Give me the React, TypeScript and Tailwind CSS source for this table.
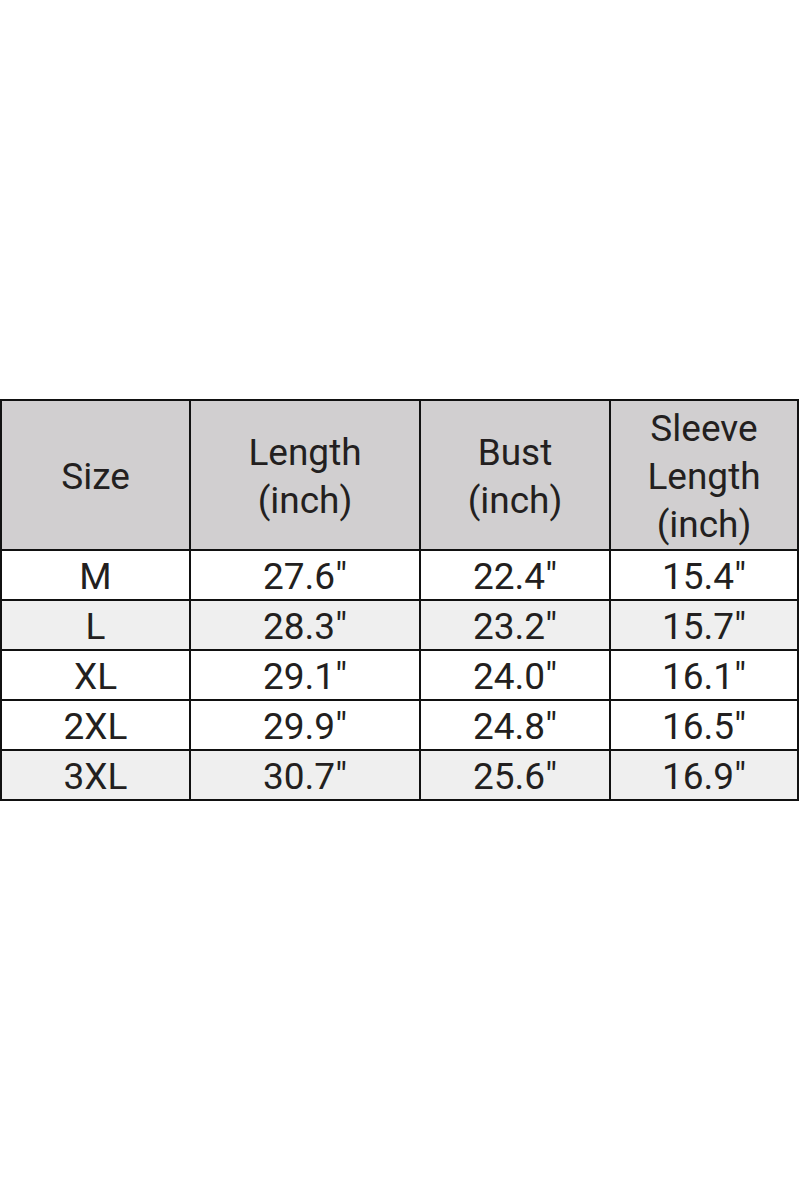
const headers = [["Size"], ["Length", "(inch)"], ["Bust", "(inch)"], ["Sleeve", "Length", "(inch)"]];

const rows = [
  { cells: ["M", '27.6"', '22.4"', '15.4"'], shaded: false },
  { cells: ["L", '28.3"', '23.2"', '15.7"'], shaded: true },
  { cells: ["XL", '29.1"', '24.0"', '16.1"'], shaded: false },
  { cells: ["2XL", '29.9"', '24.8"', '16.5"'], shaded: false },
  { cells: ["3XL", '30.7"', '25.6"', '16.9"'], shaded: true },
];

const App = () => {
  return (
    <div className="w-[800px] h-[1200px] bg-white pt-[399px] font-['Roboto',sans-serif] text-[#231f20]">
      <div className="grid grid-cols-[189px_230px_190px_188px] w-[799px] border-l-2 border-t-2 border-[#111]">
        {headers.map((lines, i) => (
          <div
            key={i}
            className="h-[150px] pt-[4px] border-r-2 border-b-2 border-[#111] bg-[#d1cfd0] flex flex-col items-center justify-center text-[37px] leading-[48px]"
          >
            {lines.map((line) => (
              <span key={line}>{line}</span>
            ))}
          </div>
        ))}
        {rows.map((row) =>
          row.cells.map((cell, j) => (
            <div
              key={row.cells[0] + j}
              className={`h-[50px] pt-[2px] border-r-2 border-b-2 border-[#111] flex items-center justify-center text-[37px] leading-none ${
                row.shaded ? "bg-[#efefef]" : "bg-white"
              }`}
            >
              {cell}
            </div>
          ))
        )}
      </div>
    </div>
  );
};

export default App;
